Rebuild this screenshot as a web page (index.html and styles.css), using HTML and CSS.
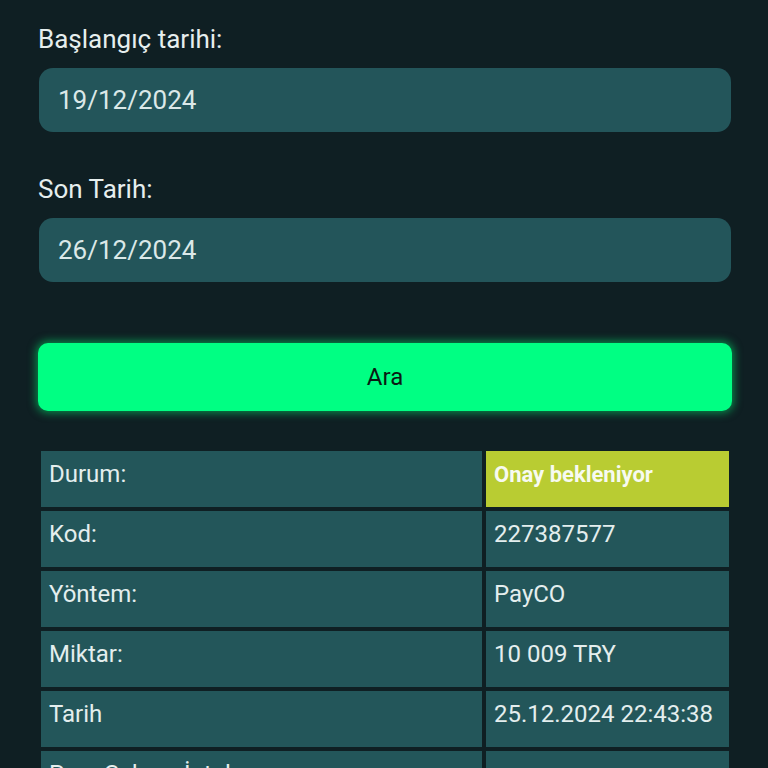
FILE: index.html
```html
<!DOCTYPE html>
<html lang="tr">
<head>
<meta charset="utf-8">
<link rel="stylesheet" href="styles.css">
</head>
<body>
<main class="page">
  <div class="field">
    <label class="label">Başlangıç tarihi:</label>
    <div class="input">19/12/2024</div>
  </div>
  <div class="field">
    <label class="label">Son Tarih:</label>
    <div class="input">26/12/2024</div>
  </div>
  <button class="search">Ara</button>
  <div class="details">
    <div class="cell">Durum:</div>
    <div class="cell status">Onay bekleniyor</div>
    <div class="cell">Kod:</div>
    <div class="cell">227387577</div>
    <div class="cell">Yöntem:</div>
    <div class="cell">PayCO</div>
    <div class="cell">Miktar:</div>
    <div class="cell">10 009 TRY</div>
    <div class="cell">Tarih</div>
    <div class="cell">25.12.2024 22:43:38</div>
    <div class="cell">Para Çekme İptal</div>
    <div class="cell"></div>
  </div>
</main>
</body>
</html>
```

FILE: styles.css
```css
* { box-sizing: border-box; }
html, body { margin: 0; height: 100%; }
body {
  background: #0f1f23;
  font-family: Roboto, "Noto Sans", sans-serif;
  color: #e4eeee;
  overflow: hidden;
}
.page {
  padding: 24px 36px 0 38px;
  display: flex;
  flex-direction: column;
}
.field {
  display: flex;
  flex-direction: column;
  margin-bottom: 42px;
}
.field + .field { margin-bottom: 61px; }
.label {
  font-size: 26px;
  line-height: 30px;
  margin-bottom: 14px;
  color: #e6eeee;
}
.input {
  height: 64px;
  margin: 0 1px;
  background: #23555a;
  border-radius: 14px;
  padding: 0 19px;
  display: flex;
  align-items: center;
  font-size: 26px;
  color: #dbe8e8;
}
.search {
  height: 68px;
  border: none;
  border-radius: 10px;
  background: #00ff83;
  box-shadow: 0 0 8px 2px rgba(0, 230, 110, 0.55);
  font-family: Roboto, "Noto Sans", sans-serif;
  font-size: 24px;
  color: #0b1a14;
  padding: 0;
}
.details {
  margin-top: 37px;
  padding: 3px;
  display: grid;
  grid-template-columns: 441px 1fr;
  gap: 4px;
}
.cell {
  height: 56px;
  background: #23565a;
  padding: 9px 8px 0 8px;
  font-size: 24px;
  line-height: 28px;
  color: #e4eeee;
  white-space: nowrap;
}
.status {
  background: #b9cc32;
  font-weight: bold;
  font-size: 22px;
  color: #f7faf0;
  padding-top: 10px;
}
```
